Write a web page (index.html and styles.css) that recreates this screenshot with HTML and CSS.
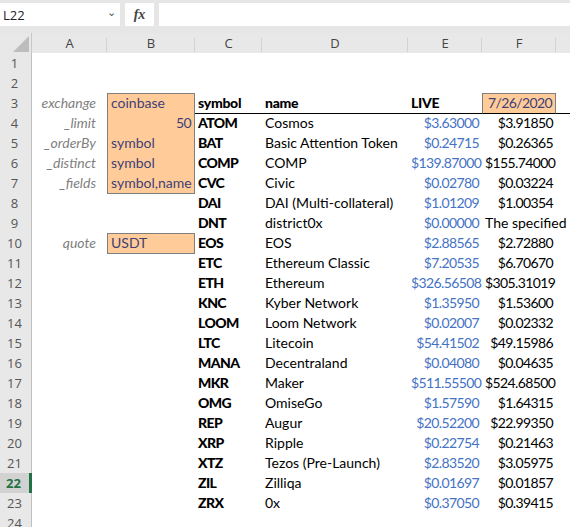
FILE: index.html
```html
<!DOCTYPE html>
<html lang="en">

<head>
    <meta charset="UTF-8">
    <title>coinbase prices</title>
    <link rel="stylesheet" href="styles.css">
</head>

<body>

    <div class="formula-bar">
        <div class="name-box">L22 <span class="chevron">&#8964;</span></div>
        <div class="fx-box">fx</div>
        <div class="formula-input"></div>
    </div>

    <div class="sheet">
        <div class="row col-head">
            <div class="corner">
                <svg width="16" height="16" viewBox="0 0 16 16"><polygon points="16,0 16,16 0,16" fill="#bdbdbd" /></svg>
            </div>
            <div>A</div>
            <div>B</div>
            <div>C</div>
            <div>D</div>
            <div>E</div>
            <div>F</div>
            <div></div>
        </div>

        <div class="row">
            <div class="rn">1</div>
        </div>
        <div class="row">
            <div class="rn">2</div>
        </div>
        <div class="row">
            <div class="rn">3</div>
            <div class="label">exchange</div>
            <div class="input first">coinbase</div>
            <div class="head line">symbol</div>
            <div class="head line">name</div>
            <div class="head line">LIVE</div>
            <div class="input first num date">7/26/2020</div>
            <div class="line"></div>
        </div>
        <div class="row">
            <div class="rn">4</div>
            <div class="label">_limit</div>
            <div class="input num">50</div>
            <div class="sym">ATOM</div>
            <div>Cosmos</div>
            <div class="live">$3.63000</div>
            <div class="num">$3.91850</div>
        </div>
        <div class="row">
            <div class="rn">5</div>
            <div class="label">_orderBy</div>
            <div class="input">symbol</div>
            <div class="sym">BAT</div>
            <div>Basic Attention Token</div>
            <div class="live">$0.24715</div>
            <div class="num">$0.26365</div>
        </div>
        <div class="row">
            <div class="rn">6</div>
            <div class="label">_distinct</div>
            <div class="input">symbol</div>
            <div class="sym">COMP</div>
            <div>COMP</div>
            <div class="live">$139.87000</div>
            <div class="num">$155.74000</div>
        </div>
        <div class="row">
            <div class="rn">7</div>
            <div class="label">_fields</div>
            <div class="input">symbol,name</div>
            <div class="sym">CVC</div>
            <div>Civic</div>
            <div class="live">$0.02780</div>
            <div class="num">$0.03224</div>
        </div>
        <div class="row">
            <div class="rn">8</div>
            <div></div>
            <div></div>
            <div class="sym">DAI</div>
            <div>DAI (Multi-collateral)</div>
            <div class="live">$1.01209</div>
            <div class="num">$1.00354</div>
        </div>
        <div class="row">
            <div class="rn">9</div>
            <div></div>
            <div></div>
            <div class="sym">DNT</div>
            <div>district0x</div>
            <div class="live">$0.00000</div>
            <div class="spill">The specified i</div>
        </div>
        <div class="row">
            <div class="rn">10</div>
            <div class="label">quote</div>
            <div class="input first">USDT</div>
            <div class="sym">EOS</div>
            <div>EOS</div>
            <div class="live">$2.88565</div>
            <div class="num">$2.72880</div>
        </div>
        <div class="row">
            <div class="rn">11</div>
            <div></div>
            <div></div>
            <div class="sym">ETC</div>
            <div>Ethereum Classic</div>
            <div class="live">$7.20535</div>
            <div class="num">$6.70670</div>
        </div>
        <div class="row">
            <div class="rn">12</div>
            <div></div>
            <div></div>
            <div class="sym">ETH</div>
            <div>Ethereum</div>
            <div class="live">$326.56508</div>
            <div class="num">$305.31019</div>
        </div>
        <div class="row">
            <div class="rn">13</div>
            <div></div>
            <div></div>
            <div class="sym">KNC</div>
            <div>Kyber Network</div>
            <div class="live">$1.35950</div>
            <div class="num">$1.53600</div>
        </div>
        <div class="row">
            <div class="rn">14</div>
            <div></div>
            <div></div>
            <div class="sym">LOOM</div>
            <div>Loom Network</div>
            <div class="live">$0.02007</div>
            <div class="num">$0.02332</div>
        </div>
        <div class="row">
            <div class="rn">15</div>
            <div></div>
            <div></div>
            <div class="sym">LTC</div>
            <div>Litecoin</div>
            <div class="live">$54.41502</div>
            <div class="num">$49.15986</div>
        </div>
        <div class="row">
            <div class="rn">16</div>
            <div></div>
            <div></div>
            <div class="sym">MANA</div>
            <div>Decentraland</div>
            <div class="live">$0.04080</div>
            <div class="num">$0.04635</div>
        </div>
        <div class="row">
            <div class="rn">17</div>
            <div></div>
            <div></div>
            <div class="sym">MKR</div>
            <div>Maker</div>
            <div class="live">$511.55500</div>
            <div class="num">$524.68500</div>
        </div>
        <div class="row">
            <div class="rn">18</div>
            <div></div>
            <div></div>
            <div class="sym">OMG</div>
            <div>OmiseGo</div>
            <div class="live">$1.57590</div>
            <div class="num">$1.64315</div>
        </div>
        <div class="row">
            <div class="rn">19</div>
            <div></div>
            <div></div>
            <div class="sym">REP</div>
            <div>Augur</div>
            <div class="live">$20.52200</div>
            <div class="num">$22.99350</div>
        </div>
        <div class="row">
            <div class="rn">20</div>
            <div></div>
            <div></div>
            <div class="sym">XRP</div>
            <div>Ripple</div>
            <div class="live">$0.22754</div>
            <div class="num">$0.21463</div>
        </div>
        <div class="row">
            <div class="rn">21</div>
            <div></div>
            <div></div>
            <div class="sym">XTZ</div>
            <div>Tezos (Pre-Launch)</div>
            <div class="live">$2.83520</div>
            <div class="num">$3.05975</div>
        </div>
        <div class="row">
            <div class="rn active">22</div>
            <div></div>
            <div></div>
            <div class="sym">ZIL</div>
            <div>Zilliqa</div>
            <div class="live">$0.01697</div>
            <div class="num">$0.01857</div>
        </div>
        <div class="row">
            <div class="rn">23</div>
            <div></div>
            <div></div>
            <div class="sym">ZRX</div>
            <div>0x</div>
            <div class="live">$0.37050</div>
            <div class="num">$0.39415</div>
        </div>
        <div class="row short">
            <div class="rn">24</div>
        </div>
    </div>

</body>

</html>
```

FILE: styles.css
```css
body {
    margin: 0;
    width: 570px;
    height: 527px;
    overflow: hidden;
    background: #ffffff;
    font-family: Lato, "Liberation Sans", sans-serif;
    font-size: 14px;
    color: #000;
}

/* formula bar */
.formula-bar {
    display: flex;
    gap: 5px;
    height: 33px;
    padding-top: 3px;
    box-sizing: border-box;
    background: #e6e6e6;
}

.formula-bar > div {
    height: 23px;
    background: #fff;
}

.name-box {
    width: 120px;
    display: flex;
    justify-content: space-between;
    align-items: center;
    padding: 0 4px 0 3px;
    box-sizing: border-box;
    font-family: "Open Sans", sans-serif;
    font-size: 13px;
    color: #222;
}

.chevron {
    font-size: 11px;
    color: #555;
    margin-top: -6px;
}

.fx-box {
    width: 29px;
    text-align: center;
    font-family: "Liberation Serif", serif;
    font-style: italic;
    font-weight: bold;
    font-size: 14px;
    line-height: 23px;
    color: #444;
}

.formula-input {
    flex: 1;
}

/* grid */
.row {
    display: grid;
    grid-template-columns: 32px 75px 88px 67px 146px 74px 74px 30px;
    height: 20px;
}

.row.short {
    height: 14px;
    overflow: hidden;
}

.row > div {
    box-sizing: border-box;
    padding: 0 3px;
    line-height: 20px;
    white-space: nowrap;
    min-width: 0;
}

.col-head {
    background: #e8e8e8;
}

.col-head > div {
    text-align: center;
    font-family: "Open Sans", sans-serif;
    font-size: 13px;
    line-height: 20px;
    color: #444;
    background: linear-gradient(#d2d2d2, #d2d2d2) right center / 1px 14px no-repeat;
}

.col-head > .corner {
    padding: 3px 2px 0 0;
    text-align: right;
    border-right: 1px solid #c8c8c8;
    background: #e8e8e8;
}

.rn {
    background: #e8e8e8;
    border-right: 1px solid #c0c0c0;
    border-bottom: 1px solid #dedede;
    font-family: "Open Sans", sans-serif;
    font-size: 13px;
    color: #555;
    text-align: center;
    padding: 0 2px 0 0 !important;
}

.rn.active {
    background: #d2d2d2;
    border-right: 3px solid #217346;
    color: #217346;
    font-weight: bold;
}

.label {
    text-align: right;
    padding-right: 11px !important;
    font-style: italic;
    color: #7f7f7f;
}

.input {
    background: #ffcc99;
    color: #3f3f76;
    border: 1px solid #7f7f7f;
    border-top: none;
    line-height: 19px !important;
}

.input.first {
    border-top: 1px solid #7f7f7f;
    line-height: 18px !important;
}

.head {
    font-weight: 900;
    letter-spacing: -0.3px;
}

.line {
    border-bottom: 1px solid #000;
    line-height: 19px !important;
}

.date {
    border-bottom-color: #000;
}

.sym {
    font-weight: 900;
    letter-spacing: -0.6px;
}

.num,
.live {
    text-align: right;
    letter-spacing: -0.6px;
}

.live {
    color: #4472c4;
}

.spill {
    overflow: visible;
    letter-spacing: 0;
}
```
